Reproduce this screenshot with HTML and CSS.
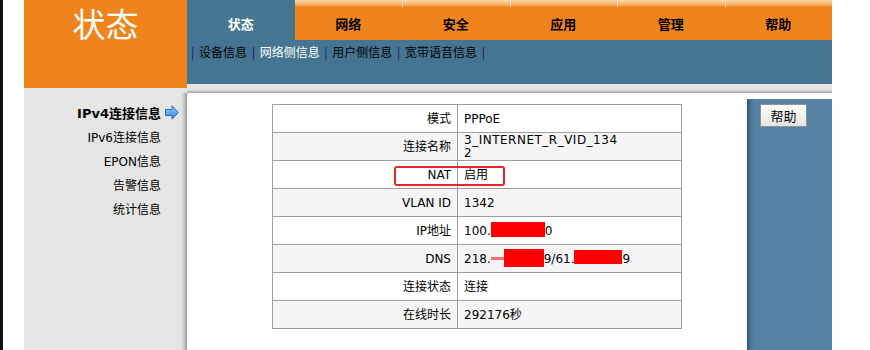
FILE: index.html
```html
<!DOCTYPE html>
<html lang="zh-CN">
<head>
    <meta charset="UTF-8">
    <meta name="viewport" content="width=device-width, initial-scale=1.0">
    <link rel="stylesheet" href="styles.css">
    <title>状态</title>
</head>
<body>
<div id="page">
    <div id="header">
        <div class="logo-col"><div class="logo">状态</div></div>
        <div class="nav-col">
            <ul class="tabs">
                <li class="active">状态</li>
                <li class="first">网络</li>
                <li>安全</li>
                <li>应用</li>
                <li>管理</li>
                <li>帮助</li>
            </ul>
            <div class="subnav">
                <span class="sep">|</span> <a>设备信息</a>
                <span class="sep">|</span> <a class="cur">网络侧信息</a>
                <span class="sep">|</span> <a>用户侧信息</a>
                <span class="sep">|</span> <a>宽带语音信息</a>
                <span class="sep">|</span>
            </div>
            <div class="band"></div>
        </div>
    </div>

    <div id="main">
        <ul class="menu">
            <li class="on">IPv4连接信息<span class="slot"><svg width="14" height="15" viewBox="0 0 14 15"><defs><linearGradient id="ar" x1="0" y1="0" x2="0" y2="1"><stop offset="0" stop-color="#9ad4fb"/><stop offset="1" stop-color="#2b7fd9"/></linearGradient></defs><polygon points="0.5,4.5 7,4.5 7,0.8 13.4,7.5 7,14.2 7,10.5 0.5,10.5" fill="url(#ar)" stroke="#2a6cc0" stroke-width="1"/></svg></span></li>
            <li>IPv6连接信息<span class="slot"></span></li>
            <li>EPON信息<span class="slot"></span></li>
            <li>告警信息<span class="slot"></span></li>
            <li>统计信息<span class="slot"></span></li>
        </ul>

        <div class="content">
            <div class="tbl-wrap">
                <table class="info">
                    <colgroup><col class="c1"><col></colgroup>
                    <tr><td class="lbl">模式</td><td>PPPoE</td></tr>
                    <tr class="alt"><td class="lbl">连接名称</td><td><div class="wrap">3_INTERNET_R_VID_1342</div></td></tr>
                    <tr><td class="lbl">NAT</td><td>启用</td></tr>
                    <tr class="alt"><td class="lbl">VLAN ID</td><td>1342</td></tr>
                    <tr><td class="lbl">IP地址</td><td>100.<span class="redact r1"></span>0</td></tr>
                    <tr class="alt"><td class="lbl">DNS</td><td>218.<span class="redact r2"></span>9/61.<span class="redact r3"></span>9</td></tr>
                    <tr><td class="lbl">连接状态</td><td>连接</td></tr>
                    <tr class="alt"><td class="lbl">在线时长</td><td>292176秒</td></tr>
                </table>
                <div class="mark"></div>
            </div>
        </div>

        <div class="aside">
            <div class="aside-inner">
                <button type="button" class="help">帮助</button>
            </div>
        </div>
    </div>
</div>
</body>
</html>
```

FILE: styles.css
```css
html, body {margin: 0; padding: 0;}
body {border-left: 3px solid #141414; background: #fff; color: #000;
font-family: "DejaVu Sans", "Noto Sans CJK SC", sans-serif; font-size: 12px;}

#page {margin-left: 21px; width: 808px; min-height: 350px; display: flex; flex-direction: column;}

/* header */
#header {display: flex;}
.logo-col {width: 163px; background: #e5e5e5;}
.logo {height: 88px; box-sizing: border-box; padding-top: 5px; background: #f0841c; color: #fff; text-align: center;
font-family: "Noto Sans CJK SC", sans-serif; font-size: 33px; line-height: 36px;}
.nav-col {flex: 1;}

.tabs {display: grid; grid-template-columns: repeat(6, 1fr); list-style: none; margin: 0; padding: 0; height: 40px;}
.tabs li {text-align: center; font-family: "Noto Sans CJK SC", sans-serif; font-weight: bold; font-size: 13px;
padding-top: 7px; line-height: 33px; box-sizing: border-box; height: 40px;
background: linear-gradient(#f3d6bd, #f3d6bd) 0 0 / 1px 7px no-repeat,
            linear-gradient(#fdd6a8, #f9b56d 4px, #f39a44 6px, #f0841c 7px);}
.tabs li.first {background: linear-gradient(#fdd6a8, #f9b56d 4px, #f39a44 6px, #f0841c 7px);}
.tabs li.active {background: #447593; color: #fff;}

.subnav {height: 44px; box-sizing: border-box; background: #447593; padding: 4px 0 0 4px;
line-height: 16px; font-size: 12px; font-family: "Noto Sans CJK SC", sans-serif; word-spacing: 2px;}
.subnav .sep {color: #16165a;}
.subnav a {color: #000;}
.subnav a.cur {color: #fff;}

.band {height: 9px; background: linear-gradient(#e6e6e6, #e3e3e3 6px, #c6c6c6 7px, #a9a9a9 9px);}

/* body */
#main {display: flex; flex: 1;}

.menu {width: 163px; box-sizing: border-box; margin: 0; padding: 7px 4px 0 0; list-style: none;
background: linear-gradient(to right, #e5e5e5 157px, #c9c9c9 160px, #999 163px);}
.menu li {display: flex; justify-content: flex-end; align-items: center; height: 24px; font-size: 12px;}
.menu li.on {font-weight: bold; font-size: 13px;}
.menu .slot {width: 22px; display: flex; padding-left: 4px; box-sizing: border-box;}

.content {flex: 1; background: #fff; padding: 11px 0 0 85px;}
.tbl-wrap {position: relative; width: 410px;}

table.info {border-collapse: collapse; table-layout: fixed; width: 410px;}
table.info col.c1 {width: 185px;}
table.info td {height: 27px; padding: 0 6px; border: 1px solid #9e9e9e; line-height: 14px; background: #fff;}
table.info tr.alt td {background: #f5f5f5;}
table.info td.lbl {text-align: right;}
.wrap {width: 158px; letter-spacing: 0.5px; word-break: break-all; line-height: 13px;}

.redact {display: inline-block; vertical-align: middle; background: #f00;}
.redact.r1 {width: 54px; height: 15px; margin-top: -3px;}
.redact.r2 {width: 53px; height: 18px; margin-top: -2px;
background: linear-gradient(to right, transparent 13px, #f00 13px),
            linear-gradient(#ff6f6f, #ff6f6f) 0 8px / 13px 3px no-repeat;}
.redact.r3 {width: 48px; height: 14px; margin-top: -3px;}

.mark {position: absolute; left: 122px; top: 62px; width: 111px; height: 20px; box-sizing: border-box;
border: 2px solid #e4262a; border-radius: 3px;}

.aside {width: 85px; padding-top: 6px; background: #fff; display: flex;}
.aside-inner {flex: 1; padding: 5px 0 0 13px;
background: linear-gradient(to right, #2e5675, #4a7698 4px, #5581a3 8px);}
.help {width: 47px; height: 23px; padding: 0; border: 1px solid #929292;
background: linear-gradient(#fefefe, #f0f0f0 60%, #e2e2e2);
font-family: "Noto Sans CJK SC", sans-serif; font-size: 13px; color: #000;}
```
